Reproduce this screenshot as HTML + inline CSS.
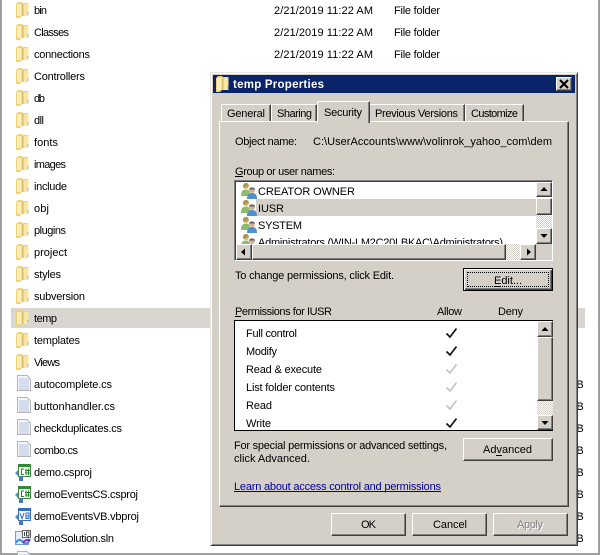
<!DOCTYPE html>
<html><head><meta charset="utf-8"><style>
html,body{margin:0;padding:0;background:#fff}
#p{position:relative;width:600px;height:555px;overflow:hidden;background:#fff}
#p>*{position:absolute}
svg{left:0;top:0}
svg text{font-family:"Liberation Sans",sans-serif;font-size:11px;fill:#000}
.b{background:#d4d0c8;box-sizing:border-box;border:1px solid;border-color:#fff #404040 #404040 #fff;box-shadow:inset -1px -1px #808080}
.s{background:#fff;box-sizing:border-box;border:1px solid;border-color:#808080 #fff #fff #808080;box-shadow:inset 1px 1px #404040}
.c{background:conic-gradient(#fff 25%,#d4d0c8 0 50%,#fff 0 75%,#d4d0c8 0) 0 0/2px 2px}
</style></head><body><div id="p">
<svg width="600" height="555" viewBox="0 0 600 555">
<defs>
<symbol id="f" viewBox="0 0 14 18" overflow="visible">
<path d="M0 3 L2 1 H6 L7 2 H12.500 V15 H6 L4 17 H0Z" fill="#f0d078"/>
<path d="M1 3 H5.500 V15 H1Z" fill="#fbeeb8"/>
<path d="M6 3 H7.500 V15 H6Z" fill="#dcbc62"/>
<path d="M7.500 3 H12.500 V15 H7.500Z" fill="#f8e6a4"/>
<path d="M11 11 H12.500 V14 H11Z" fill="#a8cfc8"/>
</symbol>
<symbol id="d" viewBox="0 0 14 16" overflow="visible">
<path d="M.5.500 H10 L13.500 4 V15.500 H.5Z" fill="#f4f6fb" stroke="#b4b4b4"/>
<path d="M2 4 H12 M2 6 H12 M2 8 H12 M2 10 H12 M2 12 H12 M2 14 H12" stroke="#b5c4e0"/>
</symbol>
<symbol id="cs" viewBox="0 0 16 16" overflow="visible">
<rect x="3.500" y=".5" width="12" height="12" fill="#fff" stroke="#3f8a3f"/>
<rect x="3" width="13" height="3" fill="#2f8a34"/>
<path d="M9 5 H6.500 V10.500 H9 M11 4.500 V11 M13.500 4.500 V11 M10 6.500 H15 M10 9 H15" fill="none" stroke="#1f8a2a"/>
<path d="M0 9 L3 6 V12Z" fill="#4d8fd0"/>
<rect x="4" y="12" width="4" height="5" fill="#4a78b8"/>
</symbol>
<symbol id="vb" viewBox="0 0 16 16" overflow="visible">
<rect x="3.500" y=".5" width="12" height="12" fill="#fff" stroke="#3a6fc0"/>
<rect x="3" width="13" height="3" fill="#2f6fc8"/>
<path d="M5 5 L7 10.500 L9 5 M11 5 V10.500 H14 V8 H11 M11 5 H14 V8" fill="none" stroke="#2563b8"/>
<path d="M0 9 L3 6 V12Z" fill="#4d8fd0"/>
<rect x="4" y="12" width="4" height="5" fill="#4a78b8"/>
</symbol>
<symbol id="sl" viewBox="0 0 16 16" overflow="visible">
<rect x=".5" y="1.500" width="13" height="13" fill="#e4ecf8" stroke="#7f9bc8"/>
<rect x="7.500" y=".5" width="8" height="7" fill="#fff" stroke="#666"/>
<path d="M9.500 2 V6 M11.500 2 H14 V6 H11.500Z" fill="none" stroke="#444"/>
<path d="M1 13 C3 9 5 9 8 12 C10 15 13 14 15 9" fill="none" stroke="#3f8fe0" stroke-width="2"/>
<path d="M8 13 C10 10 12 9 15 11" fill="none" stroke="#7a3fa8" stroke-width="2"/>
</symbol>
</defs>
<rect x="11" y="308" width="574" height="20" fill="#d9d6d1"/>
<rect x="0" y="0" width="2" height="555" fill="#a0a0a0"/>
<rect x="598" y="0" width="2" height="555" fill="#a0a0a0"/>
<rect x="0" y="553" width="600" height="2" fill="#a0a0a0"/>
<use href="#f" x="16" y="1" width="14" height="18"/>
<use href="#f" x="16" y="23" width="14" height="18"/>
<use href="#f" x="16" y="45" width="14" height="18"/>
<use href="#f" x="16" y="67" width="14" height="18"/>
<use href="#f" x="16" y="89" width="14" height="18"/>
<use href="#f" x="16" y="111" width="14" height="18"/>
<use href="#f" x="16" y="133" width="14" height="18"/>
<use href="#f" x="16" y="155" width="14" height="18"/>
<use href="#f" x="16" y="177" width="14" height="18"/>
<use href="#f" x="16" y="199" width="14" height="18"/>
<use href="#f" x="16" y="221" width="14" height="18"/>
<use href="#f" x="16" y="243" width="14" height="18"/>
<use href="#f" x="16" y="265" width="14" height="18"/>
<use href="#f" x="16" y="287" width="14" height="18"/>
<use href="#f" x="16" y="309" width="14" height="18"/>
<use href="#f" x="16" y="331" width="14" height="18"/>
<use href="#f" x="16" y="353" width="14" height="18"/>
<use href="#d" x="17" y="375" width="14" height="16"/>
<use href="#d" x="17" y="397" width="14" height="16"/>
<use href="#d" x="17" y="419" width="14" height="16"/>
<use href="#d" x="17" y="441" width="14" height="16"/>
<use href="#cs" x="15" y="464" width="16" height="16"/>
<use href="#cs" x="15" y="486" width="16" height="16"/>
<use href="#vb" x="15" y="508" width="16" height="16"/>
<use href="#sl" x="15" y="530" width="16" height="16"/>
<use href="#d" x="17" y="551" width="14" height="16"/>
<text x="34" y="14" textLength="13">bin</text>
<text x="34" y="36" textLength="35">Classes</text>
<text x="34" y="58" textLength="56">connections</text>
<text x="34" y="80" textLength="51">Controllers</text>
<text x="34" y="102" textLength="11">db</text>
<text x="34" y="124" textLength="10">dll</text>
<text x="34" y="146" textLength="24">fonts</text>
<text x="34" y="168" textLength="32">images</text>
<text x="34" y="190" textLength="33">include</text>
<text x="34" y="212" textLength="15">obj</text>
<text x="34" y="234" textLength="32">plugins</text>
<text x="34" y="256" textLength="33">project</text>
<text x="34" y="278" textLength="27">styles</text>
<text x="34" y="300" textLength="51">subversion</text>
<text x="34" y="322" textLength="23">temp</text>
<text x="34" y="344" textLength="46">templates</text>
<text x="34" y="366" textLength="26">Views</text>
<text x="34" y="388" textLength="78">autocomplete.cs</text>
<text x="34" y="410" textLength="81">buttonhandler.cs</text>
<text x="34" y="432" textLength="88">checkduplicates.cs</text>
<text x="34" y="454" textLength="44">combo.cs</text>
<text x="34" y="476" textLength="58">demo.csproj</text>
<text x="34" y="498" textLength="104">demoEventsCS.csproj</text>
<text x="34" y="520" textLength="105">demoEventsVB.vbproj</text>
<text x="34" y="542" textLength="80">demoSolution.sln</text>
<text x="274" y="14" textLength="99">2/21/2019 11:22 AM</text><text x="394" y="14" textLength="46">File folder</text>
<text x="274" y="36" textLength="99">2/21/2019 11:22 AM</text><text x="394" y="36" textLength="46">File folder</text>
<text x="274" y="58" textLength="99">2/21/2019 11:22 AM</text><text x="394" y="58" textLength="46">File folder</text>
<text x="274" y="80" textLength="99">2/21/2019 11:22 AM</text><text x="394" y="80" textLength="46">File folder</text>
<text x="569" y="388">KB</text><text x="569" y="410">KB</text><text x="569" y="432">KB</text><text x="569" y="454">KB</text><text x="569" y="476">KB</text><text x="569" y="498">KB</text><text x="569" y="520">KB</text><text x="569" y="542">KB</text>
</svg>

<div style="left:210px;top:72px;width:368px;height:474px;box-sizing:border-box;background:#d4d0c8;border:1px solid;border-color:#e8e6e0 #404040 #404040 #e8e6e0;box-shadow:inset 1px 1px #fff,inset -1px -1px #808080"></div>
<div style="left:213px;top:75px;width:362px;height:18px;background:#0a246a"></div>
<div class="b" style="left:556px;top:77px;width:16px;height:14px"></div>

<div class="b" style="left:221px;top:104px;width:50px;height:18px;border-bottom:0;box-shadow:inset -1px 0 #808080"></div>
<div class="b" style="left:271px;top:104px;width:46px;height:18px;border-bottom:0;box-shadow:inset -1px 0 #808080"></div>
<div class="b" style="left:369px;top:104px;width:96px;height:18px;border-bottom:0;box-shadow:inset -1px 0 #808080"></div>
<div class="b" style="left:465px;top:104px;width:59px;height:18px;border-bottom:0;box-shadow:inset -1px 0 #808080"></div>
<div class="b" style="left:219px;top:121px;width:350px;height:386px"></div>
<div class="b" style="left:317px;top:101px;width:53px;height:22px;border-bottom:0;box-shadow:inset -1px 0 #808080"></div>

<div class="s" style="left:234px;top:180px;width:319px;height:81px"></div>
<div style="left:256px;top:199px;width:280px;height:17px;background:#d4d0c8"></div>

<div class="s" style="left:234px;top:320px;width:319px;height:111px;border-color:#000;box-shadow:none"></div>

<div class="b" style="left:463px;top:268px;width:90px;height:23px;border:1px solid #000;box-shadow:inset 1px 1px #fff,inset -1px -1px #404040,inset -2px -2px #808080"></div>
<div style="left:467px;top:272px;width:82px;height:15px;box-sizing:border-box;border:1px dotted #000"></div>
<div class="b" style="left:463px;top:438px;width:90px;height:23px"></div>
<div class="b" style="left:331px;top:513px;width:75px;height:23px"></div>
<div class="b" style="left:412px;top:513px;width:75px;height:23px"></div>
<div class="b" style="left:493px;top:513px;width:75px;height:23px"></div>

<svg width="600" height="555" viewBox="0 0 600 555" style="z-index:1">
<defs>
<clipPath id="cl"><rect x="236" y="182" width="300" height="62"/></clipPath>
<symbol id="u" viewBox="0 0 18 18" overflow="visible">
<circle cx="6" cy="4" r="3" fill="#e0b070"/>
<path d="M6 1 C3 1 2.500 4 3.500 6 L8.500 4 C8.500 2 8 1 6 1Z" fill="#a89a50"/>
<path d="M1 14 C1 9 3 7.500 6 7.500 C9 7.500 10 9 10 14Z" fill="#8dbb6a"/>
<circle cx="12" cy="8" r="3" fill="#d8b090"/>
<path d="M9 7.500 C9 5 15 5 15 7.500Z" fill="#5a6a80"/>
<path d="M7 17 C7 12.500 9 11 12 11 C15 11 17 12.500 17 17Z" fill="#4f8fd0"/>
</symbol>
</defs>
<use href="#f" x="216" y="75" width="14" height="18"/>
<text x="233" y="88" textLength="91" style="font-weight:bold;fill:#fff;font-size:11.5px">temp Properties</text>
<path d="M560 80 L568 88 M568 80 L560 88" stroke="#000" stroke-width="2"/>
<text x="227" y="117" textLength="38">General</text>
<text x="277" y="117" textLength="35">Sharing</text>
<text x="324" y="116" textLength="38">Security</text>
<text x="375" y="117" textLength="83">Previous Versions</text>
<text x="471" y="117" textLength="47">Customize</text>
<text x="235" y="145" textLength="62">Object name:</text>
<text x="313" y="145" textLength="239">C:\UserAccounts\www\volinrok_yahoo_com\dem</text>
<text x="235" y="175" textLength="100">Group or user names:</text>
<rect x="235" y="176" width="8" height="1"/>
<use href="#u" x="240" y="182" width="18" height="18"/>
<use href="#u" x="240" y="199" width="18" height="18"/>
<use href="#u" x="240" y="216" width="18" height="18"/>
<g clip-path="url(#cl)"><use href="#u" x="240" y="233" width="18" height="18"/>
<text x="258" y="246" textLength="245">Administrators (WIN-LM2C20LBKAC\Administrators)</text></g>
<text x="258" y="195" textLength="97">CREATOR OWNER</text>
<text x="258" y="212" textLength="26">IUSR</text>
<text x="258" y="229" textLength="44">SYSTEM</text>
<text x="235" y="279" textLength="159">To change permissions, click Edit.</text>
<text x="494" y="284" textLength="28">Edit...</text>
<rect x="494" y="286" width="6" height="1"/>
<text x="235" y="315" textLength="97">Permissions for IUSR</text>
<rect x="235" y="316" width="6" height="1"/>
<text x="437" y="315" textLength="25">Allow</text>
<text x="498" y="315" textLength="25">Deny</text>
<text x="246" y="337" textLength="51">Full control</text>
<text x="246" y="355" textLength="31">Modify</text>
<text x="246" y="373" textLength="76">Read &amp; execute</text>
<text x="246" y="391" textLength="89">List folder contents</text>
<text x="246" y="409" textLength="26">Read</text>
<text x="246" y="427" textLength="25">Write</text>
<g fill="none" stroke-width="1.700">
<path d="M446.500 333.500 L450 337 L456.500 328.500" stroke="#111"/>
<path d="M446.500 351.500 L450 355 L456.500 346.500" stroke="#111"/>
<path d="M446.500 369.500 L450 373 L456.500 364.500" stroke="#c4c4c4"/>
<path d="M446.500 387.500 L450 391 L456.500 382.500" stroke="#c4c4c4"/>
<path d="M446.500 405.500 L450 409 L456.500 400.500" stroke="#c4c4c4"/>
<path d="M446.500 423.500 L450 427 L456.500 418.500" stroke="#111"/>
</g>
<text x="234" y="449" textLength="213">For special permissions or advanced settings,</text>
<text x="234" y="462" textLength="76">click Advanced.</text>
<text x="483" y="453" textLength="49">Advanced</text>
<rect x="496" y="455" width="6" height="1"/>
<text x="234" y="490" textLength="207" style="fill:#0000a0">Learn about access control and permissions</text>
<rect x="234" y="491" width="207" height="1" fill="#0000a0"/>
<text x="361" y="528" textLength="15">OK</text>
<text x="433" y="528" textLength="34">Cancel</text>
<text x="518" y="529" textLength="26" style="fill:#fff">Apply</text>
<text x="517" y="528" textLength="26" style="fill:#808080">Apply</text>
</svg>

<div class="b" style="z-index:2;left:536px;top:182px;width:16px;height:15px"></div>
<div class="b" style="z-index:2;left:536px;top:198px;width:16px;height:17px"></div>
<div class="c" style="z-index:2;left:536px;top:215px;width:16px;height:13px"></div>
<div class="b" style="z-index:2;left:536px;top:228px;width:16px;height:16px"></div>
<div class="b" style="z-index:2;left:236px;top:244px;width:16px;height:16px"></div>
<div class="b" style="z-index:2;left:252px;top:244px;width:254px;height:16px"></div>
<div class="c" style="z-index:2;left:506px;top:244px;width:14px;height:16px"></div>
<div class="b" style="z-index:2;left:520px;top:244px;width:16px;height:16px"></div>
<div style="z-index:2;left:536px;top:244px;width:16px;height:16px;background:#d4d0c8"></div>
<div class="b" style="z-index:2;left:537px;top:321px;width:16px;height:16px"></div>
<div class="b" style="z-index:2;left:537px;top:337px;width:16px;height:64px"></div>
<div class="c" style="z-index:2;left:537px;top:401px;width:16px;height:14px"></div>
<div class="b" style="z-index:2;left:537px;top:415px;width:16px;height:15px"></div>
<svg width="600" height="555" viewBox="0 0 600 555" style="z-index:3">
<path d="M544 187 L540.500 191 H547.500Z M544 238 L540.500 234 H547.500Z M241 252 L245 248.500 V255.500Z M531 252 L527 248.500 V255.500Z M545 327 L541.500 331 H548.500Z M545 425 L541.500 421 H548.500Z"/>
</svg>
</div></body></html>
